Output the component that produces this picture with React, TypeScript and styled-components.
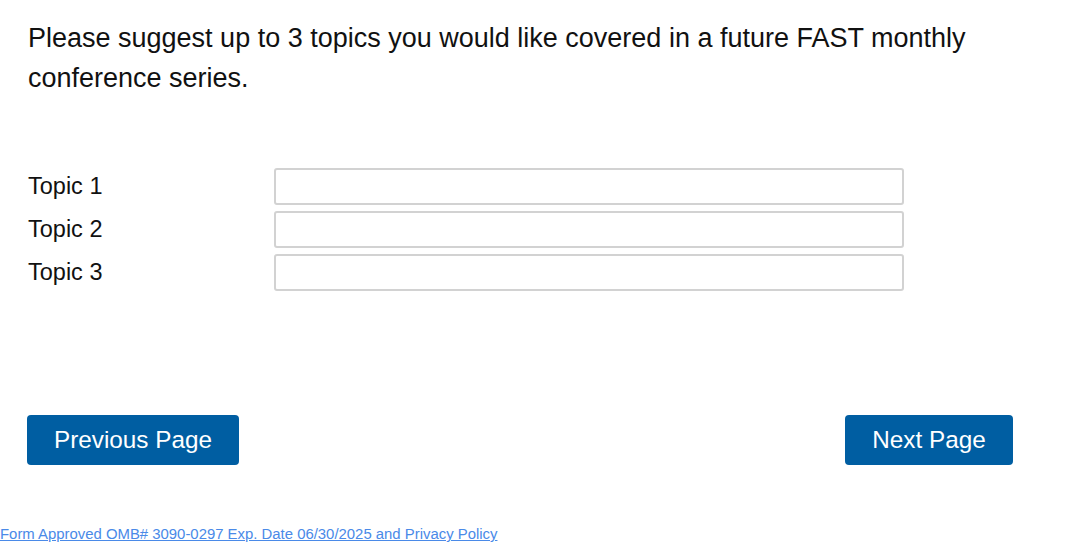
import React from 'react';
import styled, { createGlobalStyle } from 'styled-components';

const GlobalStyle = createGlobalStyle`
  html, body {
    margin: 0;
    padding: 0;
    background: #fff;
    font-family: "Liberation Sans", Arial, sans-serif;
    color: #111;
  }
`;

const Page = styled.div`
  width: 1065px;
  height: 558px;
  display: flex;
  flex-direction: column;
  box-sizing: border-box;
`;

const Content = styled.div`
  padding: 18px 28px 0 28px;
`;

const Question = styled.p`
  margin: 0;
  font-size: 27px;
  line-height: 40px;
  color: #111;
  max-width: 1000px;
`;

const TopicList = styled.div`
  margin-top: 70px;
  display: flex;
  flex-direction: column;
  gap: 6px;
`;

const TopicRow = styled.div`
  display: grid;
  grid-template-columns: 246px 630px;
  align-items: center;
`;

const Label = styled.label`
  font-size: 23.5px;
  color: #111;
`;

const TextBox = styled.input`
  box-sizing: border-box;
  width: 630px;
  height: 37px;
  border: 2px solid #d2d2d2;
  border-radius: 3px;
  padding: 4px 8px;
  font-size: 18px;
  font-family: inherit;
  outline: none;
`;

const Nav = styled.div`
  margin-top: 124px;
  display: flex;
  justify-content: space-between;
  width: 986px;
  padding-left: 27px;
`;

const NavButton = styled.button<{ $w: number }>`
  width: ${p => p.$w}px;
  height: 50px;
  border: none;
  border-radius: 4px;
  background: #005ea2;
  color: #fff;
  font-family: "Liberation Sans", Arial, sans-serif;
  font-size: 24.3px;
  cursor: pointer;
`;

const Footer = styled.a`
  margin-top: 61px;
  font-size: 14.9px;
  color: #4a8ae8;
  text-decoration: underline;
  align-self: flex-start;
`;

const topics = ['Topic 1', 'Topic 2', 'Topic 3'];

const App = () => (
  <Page>
    <GlobalStyle />
    <Content>
      <Question>
        Please suggest up to 3 topics you would like covered in a future FAST monthly conference series.
      </Question>
      <TopicList>
        {topics.map((t, i) => (
          <TopicRow key={t}>
            <Label htmlFor={`topic-${i}`}>{t}</Label>
            <TextBox id={`topic-${i}`} type="text" />
          </TopicRow>
        ))}
      </TopicList>
    </Content>
    <Nav>
      <NavButton $w={212}>Previous Page</NavButton>
      <NavButton $w={168}>Next Page</NavButton>
    </Nav>
    <Footer href="#">Form Approved OMB# 3090-0297 Exp. Date 06/30/2025 and Privacy Policy</Footer>
  </Page>
);

export default App;
